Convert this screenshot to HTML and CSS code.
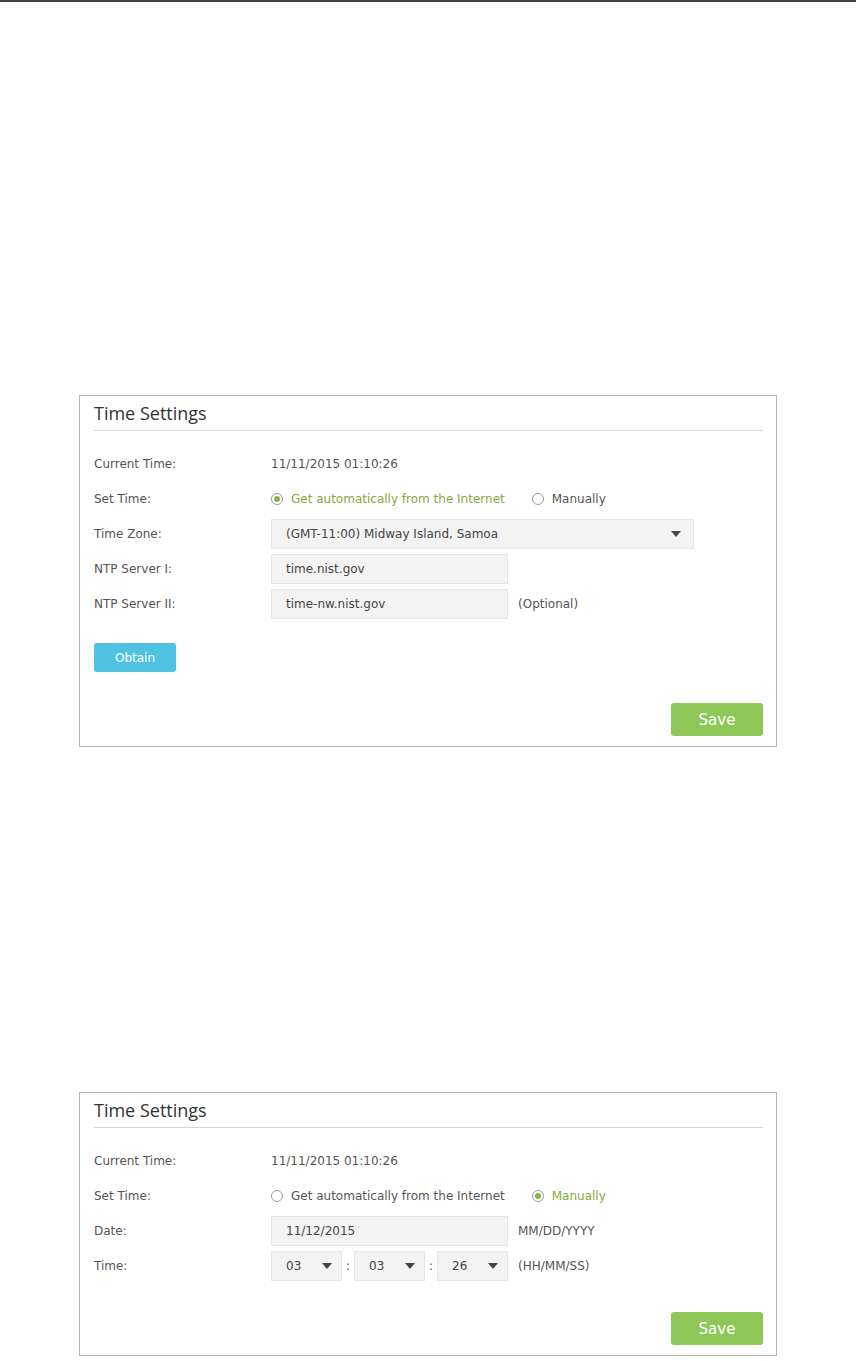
FILE: index.html
```html
<!DOCTYPE html>
<html lang="en">
<head>
  <meta charset="UTF-8" />
  <title>Time Settings</title>
  <meta name="viewport" content="width=device-width, initial-scale=1.0"/>
  <link rel="stylesheet" href="styles.css">
</head>
<body>
  <!-- top rule of the page -->
  <div class="page-rule"></div>

  <!-- Time Settings: automatic -->
  <div class="panel panel-auto">
    <div class="panel-title">Time Settings</div>

    <div class="row">
      <div class="label">Current Time:</div>
      <div class="value">11/11/2015 01:10:26</div>
    </div>
    <div class="row">
      <div class="label">Set Time:</div>
      <div class="radio-group">
        <label class="radio-item checked"><span class="radio"></span>Get automatically from the Internet</label>
        <label class="radio-item"><span class="radio"></span>Manually</label>
      </div>
    </div>
    <div class="row">
      <div class="label">Time Zone:</div>
      <div class="field select zone">
        <span>(GMT-11:00) Midway Island, Samoa</span>
        <span class="caret"></span>
      </div>
    </div>
    <div class="row">
      <div class="label">NTP Server I:</div>
      <div class="field text">time.nist.gov</div>
    </div>
    <div class="row">
      <div class="label">NTP Server II:</div>
      <div class="field text">time-nw.nist.gov</div>
      <div class="hint">(Optional)</div>
    </div>

    <button class="btn btn-obtain">Obtain</button>

    <div class="panel-footer">
      <button class="btn btn-save">Save</button>
    </div>
  </div>

  <!-- Time Settings: manual -->
  <div class="panel panel-manual">
    <div class="panel-title">Time Settings</div>

    <div class="row">
      <div class="label">Current Time:</div>
      <div class="value">11/11/2015 01:10:26</div>
    </div>
    <div class="row">
      <div class="label">Set Time:</div>
      <div class="radio-group">
        <label class="radio-item"><span class="radio"></span>Get automatically from the Internet</label>
        <label class="radio-item checked"><span class="radio"></span>Manually</label>
      </div>
    </div>
    <div class="row">
      <div class="label">Date:</div>
      <div class="field text">11/12/2015</div>
      <div class="hint">MM/DD/YYYY</div>
    </div>
    <div class="row">
      <div class="label">Time:</div>
      <div class="time-group">
        <div class="field select small"><span>03</span><span class="caret"></span></div>
        <span class="colon">:</span>
        <div class="field select small"><span>03</span><span class="caret"></span></div>
        <span class="colon">:</span>
        <div class="field select small"><span>26</span><span class="caret"></span></div>
      </div>
      <div class="hint">(HH/MM/SS)</div>
    </div>

    <div class="panel-footer">
      <button class="btn btn-save">Save</button>
    </div>
  </div>
</body>
</html>
```

FILE: styles.css
```css
/* ================================
   page
   ================================ */
body {
  margin: 0;
  padding: 0;
  background: #fff;
  font-family: "DejaVu Sans", Verdana, sans-serif;
  font-size: 12px;
  color: #555;
}

.page-rule {
  height: 2px;
  background: #444;
}

/* ================================
   panel
   ================================ */
.panel {
  width: 698px;
  margin-left: 79px;
  box-sizing: border-box;
  border: 1px solid #b5b5b5;
  padding: 5px 13px 10px 14px;
}
.panel-auto {
  margin-top: 393px;
}
.panel-manual {
  margin-top: 345px;
}

.panel-title {
  font-family: "Open Sans", sans-serif;
  font-size: 18px;
  line-height: 24px;
  color: #333;
  padding-bottom: 5px;
  border-bottom: 1px solid #d9d9d9;
  margin-bottom: 18px;
}

/* rows (margins collapse with the next block, so those set 24/31 themselves) */
.row {
  display: flex;
  align-items: center;
  height: 30px;
  margin-bottom: 5px;
}
.label {
  width: 177px;
  flex: none;
}
.value {
  color: #555;
}

/* radios */
.radio-group {
  display: flex;
  align-items: center;
  gap: 27px;
}
.radio-item {
  display: flex;
  align-items: center;
  gap: 8px;
}
.radio {
  width: 10px;
  height: 10px;
  border: 1px solid #9a9a9a;
  border-radius: 50%;
  display: flex;
  align-items: center;
  justify-content: center;
}
.radio-item.checked {
  color: #7fae3a;
}
.radio-item.checked .radio::after {
  content: "";
  width: 6px;
  height: 6px;
  border-radius: 50%;
  background: #82b440;
}

/* inputs + selects */
.field {
  height: 30px;
  box-sizing: border-box;
  background: #f3f3f3;
  border: 1px solid #e6e6e6;
  display: flex;
  align-items: center;
  padding-left: 14px;
  color: #444;
}
.field.text {
  width: 237px;
}
.field.select {
  justify-content: space-between;
}
.field.zone {
  width: 423px;
  padding-right: 12px;
}
.field.small {
  width: 71px;
  padding-right: 9px;
}
.caret {
  width: 0;
  height: 0;
  border-left: 5px solid transparent;
  border-right: 5px solid transparent;
  border-top: 6px solid #444;
}
.hint {
  margin-left: 10px;
}

.time-group {
  display: flex;
  align-items: center;
}
.colon {
  width: 12px;
  text-align: center;
}

/* buttons */
.btn {
  font-family: "DejaVu Sans", Verdana, sans-serif;
  border: none;
  border-radius: 3px;
  color: #fff;
  cursor: pointer;
}
.btn-obtain {
  display: block;
  margin-top: 24px;
  width: 82px;
  height: 29px;
  font-size: 12px;
  background: #4fc2e2;
}
.panel-footer {
  display: flex;
  justify-content: flex-end;
  margin-top: 31px;
}
.btn-save {
  width: 92px;
  height: 33px;
  font-size: 15px;
  background: #8ec757;
}
```
